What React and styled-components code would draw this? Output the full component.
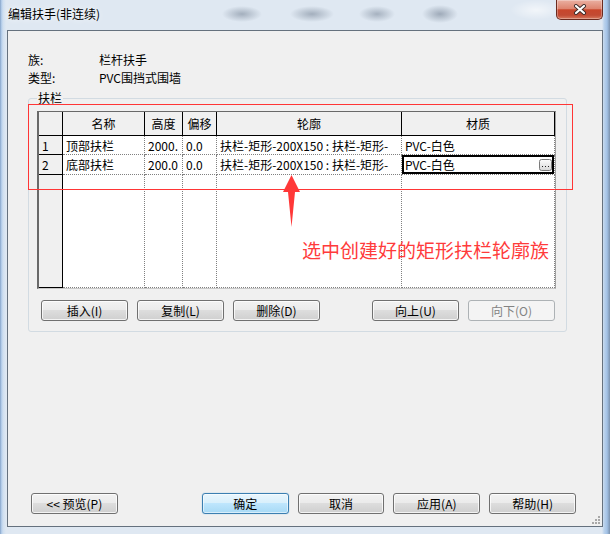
import React from 'react';
import styled, { createGlobalStyle } from 'styled-components';

const GlobalStyle = createGlobalStyle`
    html, body {
        margin: 0;
        padding: 0;
        background: #fff;
    }
    body {
        font-family: "Noto Sans CJK SC", "Liberation Sans", sans-serif;
        font-size: 12px;
        color: #000;
    }
`;

const Window = styled.div`
    position: relative;
    width: 610px;
    height: 534px;
    display: flex;
    flex-direction: column;
    overflow: hidden;
    background: linear-gradient(to right, #7f9cc0 0, #a9c5e6 1px, #cfdff0 3px, #dfe8f2 6px, #dfe8f2 calc(100% - 8px), #bcd3ec calc(100% - 6px), #a3c2e6 calc(100% - 3px), #7a91ad 100%);
`;

const TitleBar = styled.div`
    height: 30px;
    flex: none;
    display: flex;
    align-items: flex-start;
    background:
        radial-gradient(20px 8px at 242px 14px, rgba(80, 95, 115, 0.42), rgba(80, 95, 115, 0)),
        radial-gradient(22px 8px at 312px 14px, rgba(80, 95, 115, 0.42), rgba(80, 95, 115, 0)),
        radial-gradient(18px 8px at 377px 14px, rgba(80, 95, 115, 0.4), rgba(80, 95, 115, 0)),
        radial-gradient(18px 9px at 440px 14px, rgba(80, 95, 115, 0.45), rgba(80, 95, 115, 0)),
        radial-gradient(26px 10px at 536px 10px, rgba(255, 255, 255, 0.6), rgba(255, 255, 255, 0));
`;

const Title = styled.div`
    padding: 6px 0 0 8px;
    line-height: 16px;
    font-size: 12px;
    text-shadow: 0 0 6px rgba(255, 255, 255, 0.95);
`;

const CloseButton = styled.div`
    margin: 0 7px 0 auto;
    width: 47px;
    height: 20px;
    box-sizing: border-box;
    border: 1px solid #6b2a1f;
    border-top: none;
    border-radius: 0 0 5px 5px;
    background: linear-gradient(#eab0a2 0%, #de8570 45%, #c8462c 52%, #c24a33 80%, #d77a5f 100%);
    box-shadow: inset 0 0 0 1px rgba(255, 255, 255, 0.3);
    display: flex;
    align-items: center;
    justify-content: center;
`;

const Client = styled.div`
    position: relative;
    margin: 0 7px;
    height: 497px;
    box-sizing: border-box;
    border: 1px solid #65717e;
    background: #f0f0f0;
    display: flex;
    flex-direction: column;
`;

const InfoGrid = styled.div`
    margin: 20px 0 0 20px;
    display: grid;
    grid-template-columns: 71px auto;
    grid-auto-rows: 18px;
    line-height: 18px;
`;

const Group = styled.fieldset`
    margin: 4px 0 0 20px;
    width: 539px;
    min-width: 0;
    box-sizing: border-box;
    border: 1px solid #d2dbe2;
    border-radius: 3px;
    padding: 0 8px 10px 8px;
`;

const Legend = styled.legend`
    padding: 0 1px;
    line-height: 14px;
    font-size: 12px;
`;

const Grid = styled.div`
    margin-top: 6px;
    width: 519px;
    height: 178px;
    box-sizing: border-box;
    border-style: solid;
    border-width: 1px 1px 1px 2px;
    border-color: #696969 #a0a0a0 #c8c8c8 #696969;
    background: #fff;
    display: grid;
    grid-template-columns: 24px 82px 38px 34px 185px 153px;
    grid-template-rows: 24px 19px 20px 1fr;
`;

const HeadCell = styled.div`
    background: #f0f0f0;
    border-right: 1px solid #000;
    border-bottom: 1px solid #000;
    display: flex;
    align-items: center;
    justify-content: center;
`;

const RowHead = styled.div`
    background: #f0f0f0;
    border-right: 1px solid #000;
    border-bottom: 1px solid #000;
    padding-left: 3px;
    display: flex;
    align-items: center;
`;

const Cell = styled.div`
    min-width: 0;
    overflow: hidden;
    white-space: nowrap;
    border-right: 1px dotted #808080;
    border-bottom: 1px dotted #808080;
    padding: 0 2px 0 3px;
    display: flex;
    align-items: center;
    justify-content: space-between;
    box-shadow: ${(p) => (p.$selected ? 'inset 0 0 0 2px #000' : 'none')};
`;

const ButtonRow = styled.div`
    margin-top: 11px;
    padding-left: 4px;
    display: flex;
    gap: 9px;
`;

const Button = styled.button`
    width: 87px;
    height: 21px;
    box-sizing: border-box;
    padding: 0;
    margin-left: ${(p) => p.$push || 0};
    font-family: "Noto Sans CJK SC", "Liberation Sans", sans-serif;
    font-size: 12px;
    line-height: 18px;
    color: #000;
    border: 1px solid #707070;
    border-radius: 3px;
    background: linear-gradient(#f2f2f2 0%, #ebebeb 45%, #dddddd 50%, #cfcfcf 100%);
    box-shadow: inset 0 0 0 1px rgba(255, 255, 255, 0.75);

    &:disabled {
        color: #838383;
        border-color: #adb2b5;
        background: #f4f4f4;
        box-shadow: none;
    }
`;

const DefaultButton = styled(Button)`
    border-color: #3c7fb1;
    background: linear-gradient(#eaf6fd 0%, #d9f0fc 45%, #bee6fd 50%, #a7d9f5 100%);
    box-shadow: inset 0 0 0 1px rgba(255, 255, 255, 0.55), 0 0 1px #5fa8dc;
`;

const Footer = styled.div`
    margin-top: auto;
    padding: 0 26px 12px 23px;
    display: flex;
    gap: 9px;
`;

const RedFrame = styled.div`
    position: absolute;
    left: 28px;
    top: 104px;
    width: 545px;
    height: 86px;
    box-sizing: border-box;
    border: 1px solid #ff3535;
    pointer-events: none;
`;

const Arrow = styled.svg`
    position: absolute;
    left: 282px;
    top: 174px;
`;

const Note = styled.div`
    position: absolute;
    left: 302px;
    top: 238px;
    font-size: 19px;
    line-height: 24px;
    color: #ff3b3b;
    white-space: nowrap;
`;

const Grip = styled.svg`
    position: absolute;
    right: 1px;
    bottom: 1px;
`;

const EllipsisIcon = () => (
    <svg width="13" height="12" viewBox="0 0 13 12">
        <defs>
            <linearGradient id="eg" x1="0" y1="0" x2="0" y2="1">
                <stop offset="0" stopColor="#fdfdfd" />
                <stop offset="1" stopColor="#d6d6d6" />
            </linearGradient>
        </defs>
        <rect x="0.5" y="0.5" width="12" height="11" rx="2" fill="url(#eg)" stroke="#7a7a7a" />
        <rect x="3" y="7" width="1" height="1" fill="#222" />
        <rect x="6" y="7" width="1" height="1" fill="#222" />
        <rect x="9" y="7" width="1" height="1" fill="#222" />
    </svg>
);

const rows = [
    { n: '1', name: '顶部扶栏', h: '2000.', off: '0.0', profile: '扶栏-矩形-200X150 : 扶栏-矩形-', mat: 'PVC-白色' },
    { n: '2', name: '底部扶栏', h: '200.0', off: '0.0', profile: '扶栏-矩形-200X150 : 扶栏-矩形-', mat: 'PVC-白色', sel: true },
];

const App = () => {
    return (
        <Window>
            <GlobalStyle />
            <TitleBar>
                <Title>编辑扶手(非连续)</Title>
                <CloseButton>
                    <svg width="14" height="11" viewBox="0 0 14 11">
                        <path d="M3 2 L11 9 M11 2 L3 9" stroke="#3b2a28" strokeWidth="4" strokeLinecap="round" />
                        <path d="M3 2 L11 9 M11 2 L3 9" stroke="#fff" strokeWidth="2.2" strokeLinecap="round" />
                    </svg>
                </CloseButton>
            </TitleBar>
            <Client>
                <InfoGrid>
                    <span>族:</span>
                    <span>栏杆扶手</span>
                    <span>类型:</span>
                    <span>PVC围挡式围墙</span>
                </InfoGrid>
                <Group>
                    <Legend>扶栏</Legend>
                    <Grid>
                        <HeadCell />
                        <HeadCell>名称</HeadCell>
                        <HeadCell>高度</HeadCell>
                        <HeadCell>偏移</HeadCell>
                        <HeadCell>轮廓</HeadCell>
                        <HeadCell>材质</HeadCell>
                        {rows.map((r) => (
                            <React.Fragment key={r.n}>
                                <RowHead>{r.n}</RowHead>
                                <Cell>{r.name}</Cell>
                                <Cell>{r.h}</Cell>
                                <Cell>{r.off}</Cell>
                                <Cell>{r.profile}</Cell>
                                <Cell $selected={r.sel}>
                                    {r.mat}
                                    {r.sel && <EllipsisIcon />}
                                </Cell>
                            </React.Fragment>
                        ))}
                        <RowHead />
                        <Cell />
                        <Cell />
                        <Cell />
                        <Cell />
                        <Cell />
                    </Grid>
                    <ButtonRow>
                        <Button>插入(I)</Button>
                        <Button>复制(L)</Button>
                        <Button>删除(D)</Button>
                        <Button $push="43px">向上(U)</Button>
                        <Button disabled>向下(O)</Button>
                    </ButtonRow>
                </Group>
                <Footer>
                    <Button>{'<< 预览(P)'}</Button>
                    <DefaultButton $push="75px">确定</DefaultButton>
                    <Button>取消</Button>
                    <Button>应用(A)</Button>
                    <Button>帮助(H)</Button>
                </Footer>
                <Grip width="10" height="10" viewBox="0 0 10 10">
                    <g fill="#a8a8a8">
                        <rect x="7" y="1" width="2" height="2" />
                        <rect x="4" y="4" width="2" height="2" />
                        <rect x="7" y="4" width="2" height="2" />
                        <rect x="1" y="7" width="2" height="2" />
                        <rect x="4" y="7" width="2" height="2" />
                        <rect x="7" y="7" width="2" height="2" />
                    </g>
                </Grip>
            </Client>
            <RedFrame />
            <Arrow width="20" height="56" viewBox="0 0 20 56">
                <polygon points="9.5,1 18,18 13,18 9.5,53 6,18 1,18" fill="#ff3838" />
            </Arrow>
            <Note>选中创建好的矩形扶栏轮廓族</Note>
        </Window>
    );
};

export default App;
